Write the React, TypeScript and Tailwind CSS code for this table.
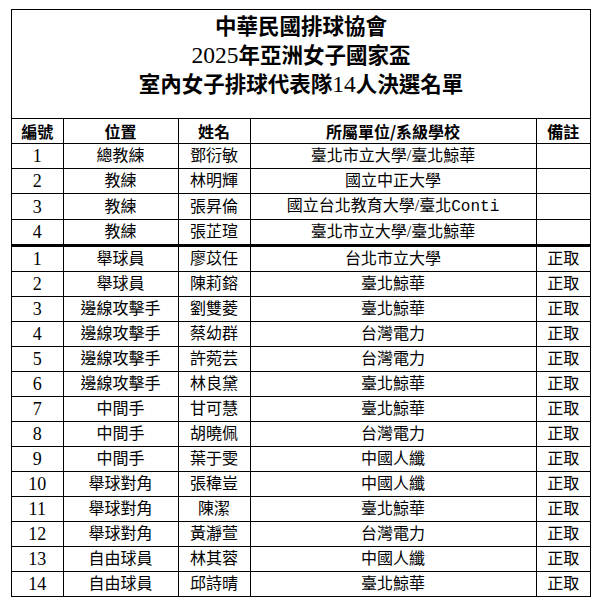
import React from "react";

type Row = { no: string; pos: string; name: string; unit: React.ReactNode; note: string };

const staff: Row[] = [
  { no: "1", pos: "總教練", name: "鄧衍敏", unit: "臺北市立大學/臺北鯨華", note: "" },
  { no: "2", pos: "教練", name: "林明輝", unit: "國立中正大學", note: "" },
  {
    no: "3",
    pos: "教練",
    name: "張昇倫",
    unit: (
      <>
        國立台北教育大學/臺北<span className="font-['Liberation_Mono',monospace]">Conti</span>
      </>
    ),
    note: "",
  },
  { no: "4", pos: "教練", name: "張芷瑄", unit: "臺北市立大學/臺北鯨華", note: "" },
];

const players: Row[] = [
  { no: "1", pos: "舉球員", name: "廖苡任", unit: "台北市立大學", note: "正取" },
  { no: "2", pos: "舉球員", name: "陳莉鎔", unit: "臺北鯨華", note: "正取" },
  { no: "3", pos: "邊線攻擊手", name: "劉雙菱", unit: "臺北鯨華", note: "正取" },
  { no: "4", pos: "邊線攻擊手", name: "蔡幼群", unit: "台灣電力", note: "正取" },
  { no: "5", pos: "邊線攻擊手", name: "許菀芸", unit: "台灣電力", note: "正取" },
  { no: "6", pos: "邊線攻擊手", name: "林良黛", unit: "臺北鯨華", note: "正取" },
  { no: "7", pos: "中間手", name: "甘可慧", unit: "臺北鯨華", note: "正取" },
  { no: "8", pos: "中間手", name: "胡曉佩", unit: "台灣電力", note: "正取" },
  { no: "9", pos: "中間手", name: "葉于雯", unit: "中國人纖", note: "正取" },
  { no: "10", pos: "舉球對角", name: "張稦豈", unit: "中國人纖", note: "正取" },
  { no: "11", pos: "舉球對角", name: "陳潔", unit: "臺北鯨華", note: "正取" },
  { no: "12", pos: "舉球對角", name: "黃瀞萱", unit: "台灣電力", note: "正取" },
  { no: "13", pos: "自由球員", name: "林其蓉", unit: "中國人纖", note: "正取" },
  { no: "14", pos: "自由球員", name: "邱詩晴", unit: "臺北鯨華", note: "正取" },
];

function BodyRow({ r, thick }: { r: Row; thick?: boolean }) {
  const cell =
    "border border-black h-[24px] p-0 text-center align-middle leading-[24px] " +
    (thick ? "border-t-[3px]" : "");
  return (
    <tr>
      <td className={cell + " text-[18px]"}>{r.no}</td>
      <td className={cell}>{r.pos}</td>
      <td className={cell}>{r.name}</td>
      <td className={cell + " whitespace-nowrap"}>{r.unit}</td>
      <td className={cell}>{r.note}</td>
    </tr>
  );
}

export default function App() {
  const th =
    "border border-black h-[24px] p-0 text-center align-middle leading-[24px] font-bold text-[16px]";
  const line = "h-[29px] leading-[29px] overflow-visible whitespace-nowrap";
  return (
    <div className="min-h-[606px] w-[599px] bg-white pt-[9px] text-black">
      <div className="ml-[11px] w-[580px] border border-black">
        <div className="h-[109px] border-b border-black text-center font-['Noto_Sans_CJK_TC',sans-serif] text-[21.5px] font-bold">
          <div className={line}>中華民國排球協會</div>
          <div className={line}>
            <span className="font-['Liberation_Serif',serif] font-normal text-[23.5px]">2025</span>
            年亞洲女子國家盃
          </div>
          <div className={line}>
            室內女子排球代表隊
            <span className="font-['Liberation_Serif',serif] font-normal text-[23.5px]">14</span>
            人決選名單
          </div>
        </div>
        <table className="w-full table-fixed border-collapse border-hidden font-['Liberation_Serif','Noto_Sans_CJK_TC',sans-serif] text-[16px]">
          <colgroup>
            <col className="w-[51px]" />
            <col className="w-[115px]" />
            <col className="w-[72px]" />
            <col className="w-[286px]" />
            <col />
          </colgroup>
          <thead>
            <tr className="font-['Noto_Sans_CJK_TC',sans-serif]">
              <th className={th}>編號</th>
              <th className={th}>位置</th>
              <th className={th}>姓名</th>
              <th className={th}>所屬單位/系級學校</th>
              <th className={th}>備註</th>
            </tr>
          </thead>
          <tbody>
            {staff.map((r, i) => (
              <BodyRow key={"s" + i} r={r} />
            ))}
            {players.map((r, i) => (
              <BodyRow key={"p" + i} r={r} thick={i === 0} />
            ))}
          </tbody>
        </table>
      </div>
    </div>
  );
}
